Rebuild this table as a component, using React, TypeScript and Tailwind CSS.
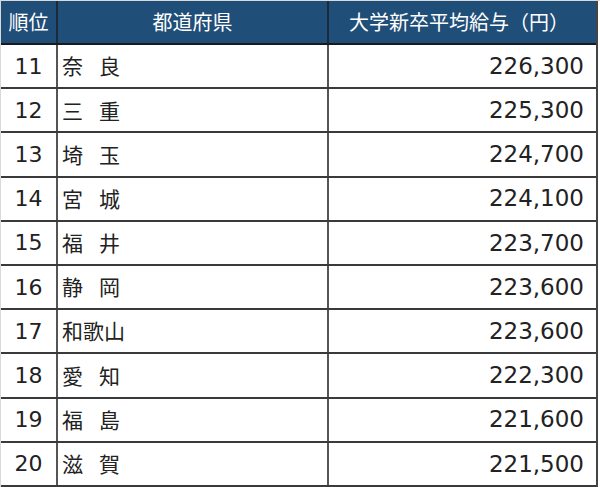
import React from "react";

const rows = [
  { rank: 11, pref: "奈良", pay: "226,300" },
  { rank: 12, pref: "三重", pay: "225,300" },
  { rank: 13, pref: "埼玉", pay: "224,700" },
  { rank: 14, pref: "宮城", pay: "224,100" },
  { rank: 15, pref: "福井", pay: "223,700" },
  { rank: 16, pref: "静岡", pay: "223,600" },
  { rank: 17, pref: "和歌山", pay: "223,600" },
  { rank: 18, pref: "愛知", pay: "222,300" },
  { rank: 19, pref: "福島", pay: "221,600" },
  { rank: 20, pref: "滋賀", pay: "221,500" },
];

const App: React.FC = () => {
  return (
    <div
      className="w-[600px] h-[487px] bg-white border-l border-t border-[#d9d9d9] overflow-hidden"
      style={{ fontFamily: '"DejaVu Sans", "Noto Sans CJK JP", sans-serif' }}
    >
      <div className="w-[597px] border-r-2 border-[#444]">
        {/* header */}
        <div
          className="grid grid-cols-[57px_271px_268px] h-[44px] bg-[#1f4e79] text-white text-[20px] border-b-2 border-[#1a1a1a]"
          style={{ fontFamily: '"Noto Sans CJK JP", sans-serif' }}
        >
          <div className="flex items-center justify-center border-r-2 border-[#1a2a3a]">順位</div>
          <div className="flex items-center justify-center border-r-2 border-[#1a2a3a]">都道府県</div>
          <div className="flex items-center justify-center pr-[8px]">大学新卒平均給与（円）</div>
        </div>
        {rows.map((r) => (
          <div
            key={r.rank}
            className="grid grid-cols-[57px_271px_268px] h-[44.2px] text-[#222] text-[22px] border-b-2 border-[#3a3a3a]"
          >
            <div className="flex items-center justify-center border-r-2 border-[#555]">{r.rank}</div>
            <div
              className="flex items-center pl-[4px] border-r-2 border-[#555]"
              style={{ fontFamily: '"Noto Sans CJK JP", sans-serif', fontSize: 21 }}
            >
              {r.pref.length === 2 ? (
                <>
                  <span>{r.pref[0]}</span>
                  <span className="inline-block w-[16px]" />
                  <span>{r.pref[1]}</span>
                </>
              ) : (
                r.pref
              )}
            </div>
            <div className="flex items-center justify-end pr-[13px] text-[23px]">{r.pay}</div>
          </div>
        ))}
      </div>
    </div>
  );
};

export default App;
